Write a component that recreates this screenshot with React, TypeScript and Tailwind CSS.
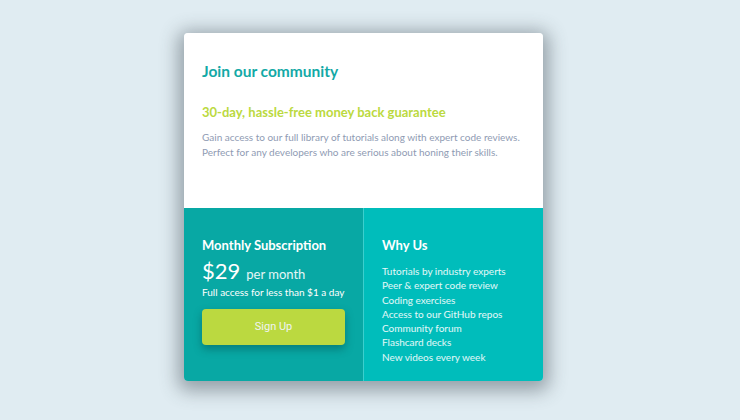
import React from "react";

export default function App() {
  const items = [
    "Tutorials by industry experts",
    "Peer & expert code review",
    "Coding exercises",
    "Access to our GitHub repos",
    "Community forum",
    "Flashcard decks",
    "New videos every week",
  ];
  return (
    <div
      className="w-[740px] h-[420px] bg-[#e0ecf2] flex pl-[184px] pt-[33px]"
      style={{ fontFamily: "Lato, 'Open Sans', sans-serif" }}
    >
      <div className="w-[359px] h-[348px] rounded-[4px] overflow-hidden shadow-[0_4px_18px_6px_rgba(60,70,80,0.45)] flex flex-col">
        <div className="h-[175px] bg-white px-[18px] pt-[28px]">
          <h1 className="text-[15.5px] leading-[20px] font-bold text-[#13a9a6]">Join our community</h1>
          <h2 className="mt-[22px] text-[13px] leading-[18px] font-bold text-[#bbd940]">
            30-day, hassle-free money back guarantee
          </h2>
          <p className="mt-[9px] text-[10px] leading-[15px] text-[#8f9bb3]">
            Gain access to our full library of tutorials along with expert code reviews.
            <br />
            Perfect for any developers who are serious about honing their skills.
          </p>
        </div>
        <div className="flex h-[173px]">
          <div className="w-[179px] bg-[#08a8a4] px-[18px] pt-[28px] text-white">
            <h3 className="text-[13px] leading-[18px] font-bold">Monthly Subscription</h3>
            <div className="mt-[6px] flex items-baseline gap-[6px] leading-[22px]">
              <span className="text-[22px]">$29</span>
              <span className="text-[13px] text-white/90">per month</span>
            </div>
            <p className="text-[10px] leading-[14px]">Full access for less than $1 a day</p>
            <button
              className="mt-[10px] w-[143px] h-[36px] rounded-[4px] bg-[#bbd940] text-[11px] text-[#f0f4f4] shadow-[0_4px_8px_rgba(0,60,60,0.4)]"
              style={{ fontFamily: "Roboto, Arial, sans-serif" }}
            >
              Sign Up
            </button>
          </div>
          <div className="flex-1 bg-[#00bdbb] border-l border-[#3ccfcd] px-[18px] pt-[28px] text-white">
            <h3 className="text-[13px] leading-[18px] font-bold">Why Us</h3>
            <ul className="mt-[10px] text-[10px] leading-[14.3px] text-white/90">
              {items.map((t) => (
                <li key={t}>{t}</li>
              ))}
            </ul>
          </div>
        </div>
      </div>
    </div>
  );
}
